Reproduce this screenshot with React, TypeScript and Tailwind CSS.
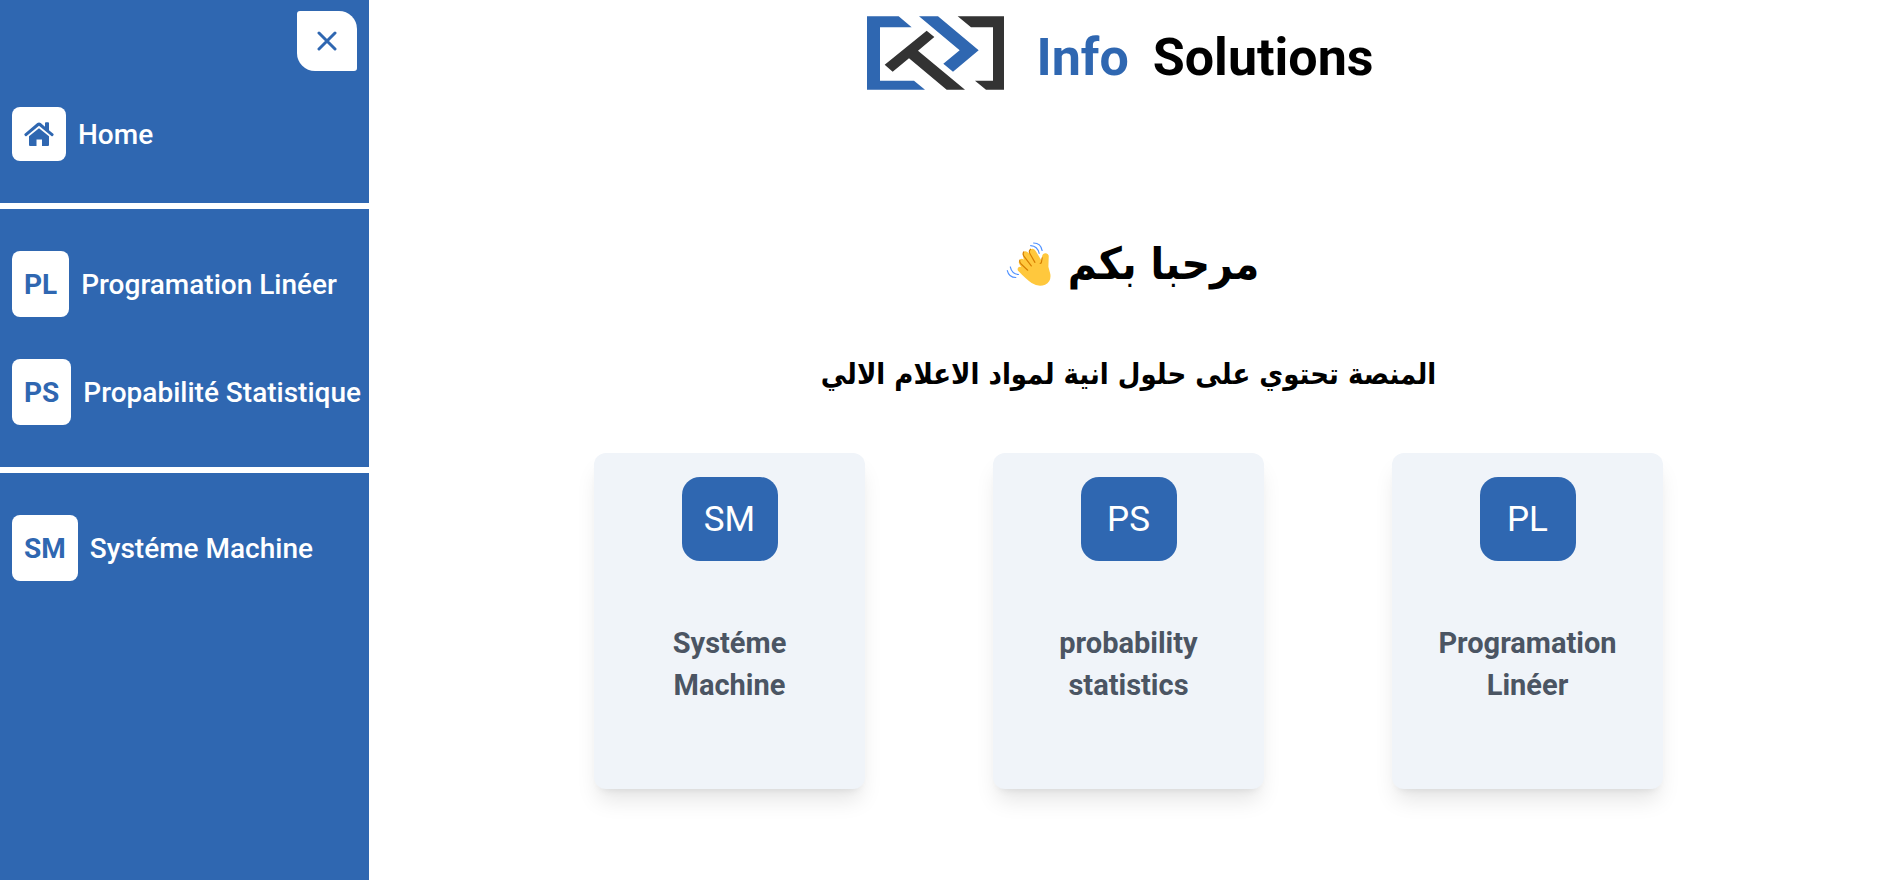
const arabic = "font-['DejaVu_Sans_Condensed','DejaVu_Sans',sans-serif]";

function Logo() {
  return (
    <svg viewBox="24 49 411 222" className="h-[74px] w-[137px] shrink-0" role="img" aria-label="Info Solutions">
      <g fill="#2f67b1">
        <path d="M24 50H119L158 83H63V243H165L198 270H24Z" />
        <path d="M180 50H237L359 152L282 216L253 192L302 152Z" />
      </g>
      <g fill="#333333">
        <path d="M296 50H435V270H381L348 243H402V83H336Z" />
        <path d="M203 93L226 112L177 153L318 270H263L150 176L101 216L77 195Z" />
      </g>
    </svg>
  );
}

function HomeIcon() {
  return (
    <svg viewBox="0 0 30 24" className="h-6 w-[30px]" fill="#2f67b1" aria-hidden="true">
      <path d="M21 1.2q0-.9.9-.9h2.2q.9 0 .9.9V8.300l4.300 3.500q.7.700.1 1.400l-.6.700q-.7.700-1.400.1L15 3.700 2.600 14q-.7.600-1.400-.1l-.6-.7q-.6-.8.100-1.400L13.300 1q1.700-1.200 3.400 0L21 4.800Z" />
      <path d="M15 6.200 25 14.300V23q0 1-1 1h-6v-6.500h-5.500V24H6q-1 0-1-1v-8.700Z" />
    </svg>
  );
}

function WavingHand() {
  return (
    <svg viewBox="50 63 140 138" className="h-[46px] w-[46px] shrink-0" fill="none" strokeLinecap="round" aria-hidden="true">
      <path
        d="M89 155Q82 148 88 142Q91 139 96 141L91 133Q86 125 93 118Q98 114 104 119L102 108Q98 99 106 94Q112 91 118 98L122 102Q118 91 126 87Q134 83 140 92L158 121L160 108Q162 98 172 99Q181 101 180 111L179 140L185 163Q188 186 169 195Q149 203 128 190Q113 180 89 155Z"
        fill="#ffc83d"
      />
      <g stroke="#d67d00" strokeWidth="3.500">
        <path d="M92 120Q90 126 96 132L116 151" />
        <path d="M104 95Q100 101 105 109L127 138" />
        <path d="M125 87Q118 92 123 101L138 127" />
        <path d="M160 113L158 126Q158 130 154 130" />
      </g>
      <g stroke="#5092ff" strokeWidth="3.500">
        <path d="M134 68Q156 68 160 91" />
        <path d="M125 76Q146 77 151 100" />
        <path d="M54 152Q59 173 80 173" />
        <path d="M63 141Q68 163 88 164" />
      </g>
    </svg>
  );
}

function NavLink({ code, label }: { code: string; label: string }) {
  return (
    <a href="#" className="flex items-center gap-3 whitespace-nowrap">
      <span className="flex h-[66px] items-center rounded-lg bg-white px-3 pt-0.5 text-[28px] font-bold text-[#2f67b1]">{code}</span>
      <span className="pt-0.5 text-[28px] font-medium text-white">{label}</span>
    </a>
  );
}

function CourseCard({ code, title }: { code: string; title: string }) {
  return (
    <a href="#" className="flex h-[336px] w-[271px] flex-col items-center rounded-xl bg-[#f0f4f9] px-9 pt-6 shadow-[0_15px_22px_-4px_rgba(0,0,0,0.1),0_6px_9px_-6px_rgba(0,0,0,0.1)]">
      <span className="flex h-[84px] w-24 items-center justify-center rounded-[18px] bg-[#2f67b1] pt-0.5 text-[35px] text-white">{code}</span>
      <span className="mt-[61px] text-center text-[29px] leading-[42px] font-bold text-[#4b5563]">{title}</span>
    </a>
  );
}

export default function App() {
  return (
    <div className="flex min-h-screen bg-white font-['Roboto','DejaVu_Sans',sans-serif]">
      <aside className="w-[369px] shrink-0 bg-[#2f67b1]">
        <div className="flex justify-end px-3 pt-[11px]">
          <button type="button" aria-label="Close menu" className="flex size-[60px] items-center justify-center rounded-tl-[3px] rounded-tr-[18px] rounded-br-[3px] rounded-bl-[18px] bg-white">
            <svg viewBox="0 0 20 20" className="size-5" stroke="#2f67b1" strokeWidth="3" strokeLinecap="round" aria-hidden="true">
              <path d="M2 2 18 18M18 2 2 18" />
            </svg>
          </button>
        </div>
        <nav>
          <div className="px-3 pt-9 pb-[42px]">
            <a href="#" className="flex items-center gap-3">
              <span className="flex size-[54px] items-center justify-center rounded-lg bg-white">
                <HomeIcon />
              </span>
              <span className="pt-0.5 text-[28px] font-medium text-white">Home</span>
            </a>
          </div>
          <div className="flex flex-col gap-[42px] border-y-6 border-white px-3 py-[42px]">
            <NavLink code="PL" label="Programation Linéer" />
            <NavLink code="PS" label="Propabilité Statistique" />
          </div>
          <div className="px-3 py-[42px]">
            <NavLink code="SM" label="Systéme Machine" />
          </div>
        </nav>
      </aside>

      <main className="flex flex-1 flex-col items-center">
        <header className="flex items-start pt-4 pr-4">
          <Logo />
          <div className="flex gap-6 pt-1 pl-8 text-[52px] leading-[76px] font-bold">
            <span className="text-[#2f67b1]">Info</span>
            <span className="text-black">Solutions</span>
          </div>
        </header>
        <h1 dir="rtl" className={`${arabic} mt-[130px] flex items-center gap-4 pl-2 text-[44px] leading-[76px] font-bold text-black`}>
          <span>مرحبا بكم</span>
          <WavingHand />
        </h1>
        <p dir="rtl" className={`${arabic} mt-[48px] text-[29px] leading-[48px] font-bold text-black`}>
          المنصة تحتوي على حلول انية لمواد الاعلام الالي
        </p>
        <section className="mt-[55px] flex justify-center gap-32">
          <CourseCard code="SM" title="Systéme Machine" />
          <CourseCard code="PS" title="probability statistics" />
          <CourseCard code="PL" title="Programation Linéer" />
        </section>
      </main>
    </div>
  );
}
